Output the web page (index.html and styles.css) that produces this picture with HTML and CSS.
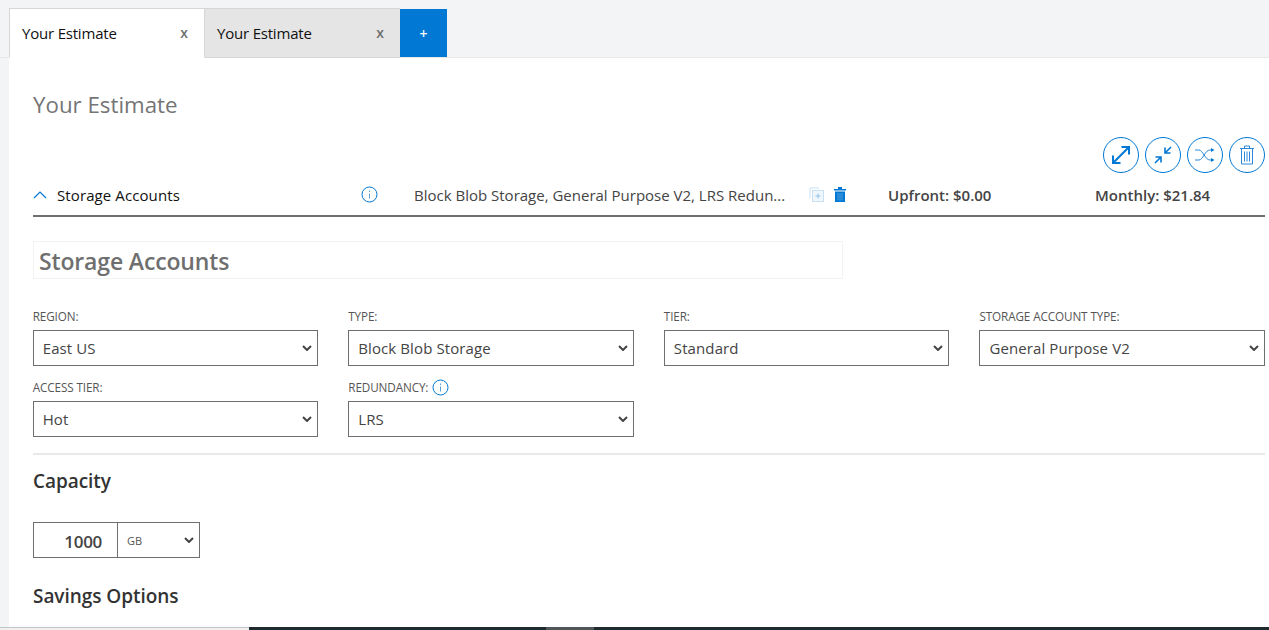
FILE: index.html
```html
<!DOCTYPE html>
<html lang="en">
<head>
<meta charset="utf-8">
<title>Your Estimate</title>
<link rel="stylesheet" href="styles.css">
</head>
<body>
<div class="tabs">
  <div class="tab tab-active"><span class="tab-name">Your Estimate</span><span class="tab-x">x</span></div>
  <div class="tab tab-idle"><span class="tab-name">Your Estimate</span><span class="tab-x">x</span></div>
  <div class="tab-add">+</div>
</div>
<main class="panel">
  <h1 class="title">Your Estimate</h1>
  <div class="tools">
    <button class="round"><svg width="22" height="22" viewBox="0 0 22 22" fill="none" stroke="#0078d4" stroke-width="2"><path d="M3 19 19 3M11.500 3H19V10.500M3 11.500V19H10.500"/></svg></button>
    <button class="round"><svg width="22" height="22" viewBox="0 0 22 22" fill="none" stroke="#0078d4" stroke-width="1.600"><path d="M13 9 19 3M13 3.500V9H18.500M3 19 9 13M3.500 13H9V18.500"/></svg></button>
    <button class="round"><svg width="20" height="16" viewBox="0 0 20 16" fill="none" stroke="#2b88d8" stroke-width="1"><path d="M0 3H4C8 3 10 13 15 13H18M0 13H4C8 13 10 3 15 3H18"/><path d="M16 1 19.500 3 16 5ZM16 11 19.500 13 16 15Z" fill="#0078d4" stroke="none"/></svg></button>
    <button class="round"><svg width="16" height="20" viewBox="0 0 16 20" fill="none" stroke="#2b88d8" stroke-width="1"><path d="M1 3.500H15M5.500 3V1H10.500V3M2.500 4V19H13.500V4M5.500 6.500V16.500M8 6.500V16.500M10.500 6.500V16.500"/></svg></button>
  </div>
  <div class="acc">
    <svg class="acc-chev" width="14" height="8" viewBox="0 0 14 8" fill="none" stroke="#0078d4" stroke-width="1.200"><path d="M1 7 7 1 13 7"/></svg>
    <span class="acc-title">Storage Accounts</span>
    <svg class="acc-info" width="17" height="17" viewBox="0 0 17 17" fill="none" stroke="#0078d4"><circle cx="8.500" cy="8.500" r="7.500"/><path d="M8.500 7.500V12.500M8.500 4.500V6" stroke="#5a9fd8"/></svg>
    <span class="acc-desc">Block Blob Storage, General Purpose V2, LRS Redun...</span>
    <svg class="acc-copy" width="15" height="15" viewBox="0 0 15 15" fill="none" stroke="#c7e0f4"><path d="M1 11V1H10"/><rect x="3.500" y="3.500" width="11" height="11" fill="#eff6fc"/><path d="M9 6.500V11.500M6.500 9H11.500" stroke="#90c2ea"/></svg>
    <svg class="acc-trash" width="12" height="15" viewBox="0 0 12 15"><path d="M0 2H4V0H8V2H12V3.500H0ZM1 4.500H11V15H1Z" fill="#0078d4"/><path d="M4 6V13.500M6 6V13.500M8 6V13.500" stroke="#71afe5" stroke-width=".7"/></svg>
    <strong class="acc-up">Upfront: $0.00</strong>
    <strong class="acc-mo">Monthly: $21.84</strong>
  </div>
  <input class="name" value="Storage Accounts">
  <div class="fields">
    <label class="field"><span class="lab">REGION:</span><select class="sel"><option>East US</option></select></label>
    <label class="field"><span class="lab">TYPE:</span><select class="sel"><option>Block Blob Storage</option></select></label>
    <label class="field"><span class="lab">TIER:</span><select class="sel"><option>Standard</option></select></label>
    <label class="field"><span class="lab">STORAGE ACCOUNT TYPE:</span><select class="sel"><option>General Purpose V2</option></select></label>
    <label class="field"><span class="lab">ACCESS TIER:</span><select class="sel"><option>Hot</option></select></label>
    <label class="field"><span class="lab">REDUNDANCY: <svg class="lab-info" width="17" height="17" viewBox="0 0 17 17" fill="none" stroke="#0078d4"><circle cx="8.500" cy="8.500" r="7.500"/><path d="M8.500 7.500V12.500M8.500 4.500V6" stroke="#5a9fd8"/></svg></span><select class="sel"><option>LRS</option></select></label>
  </div>
  <hr class="rule">
  <h2 class="sec">Capacity</h2>
  <div class="cap">
    <input class="cap-num" value="1000">
    <select class="cap-unit"><option>GB</option></select>
  </div>
  <h2 class="sec sec-save">Savings Options</h2>
</main>
<div class="strip"><div class="strip-light"></div><div class="strip-a"></div><div class="strip-b"></div><div class="strip-c"></div></div>
</body>
</html>
```
FILE: styles.css
```css
* { box-sizing: border-box; }
html, body { margin: 0; height: 630px; overflow: hidden; }
body { background: #f3f4f6; font-family: "Open Sans", "Noto Sans", sans-serif; color: #212121; position: relative; }
.tabs { display: flex; margin-top: 8px; padding-left: 9px; height: 50px; box-shadow: inset 0 -1px 0 #e8e8e8; }
.tab { width: 196px; display: flex; align-items: center; justify-content: space-between; padding: 0 16px 1px 12px; font-size: 15px; border-top: 1px solid #d6d6d6; border-bottom: 1px solid #d6d6d6; color: #111; }
.tab-active { background: #fff; border-left: 1px solid #d6d6d6; border-right: 1px solid #d6d6d6; border-bottom-color: #fff; }
.tab-idle { background: #e5e5e5; width: 195px; }
.tab-name { letter-spacing: -.2px; }
.tab-x { color: #6f6f6f; font-size: 14px; font-weight: 600; }
.tab-add { width: 47px; background: #0078d4; color: #fff; display: flex; align-items: center; justify-content: center; font-size: 14px; font-weight: 600; margin-top: 1px; margin-bottom: 1px; }
.panel { margin-left: 9px; background: #fff; height: 572px; padding: 0 4px 0 24px; }
.title { margin: 0; padding-top: 30px; height: 79px; font-size: 22.3px; line-height: 34px; font-weight: 400; color: #757575; }
.tools { display: flex; justify-content: flex-end; gap: 6px; height: 37px; }
.round { width: 36px; height: 36px; border: 1px solid #0078d4; border-radius: 50%; background: #fff; padding: 0; display: flex; align-items: center; justify-content: center; }
.acc { display: flex; align-items: center; height: 43px; border-bottom: 2px solid #6f6f6f; font-size: 15px; }
.acc-chev { margin-right: 10px; }
.acc-title { width: 304px; color: #111; letter-spacing: .1px; }
.acc-info { margin-right: 36px; }
.acc-desc { width: 375px; white-space: nowrap; color: #444; }
.acc-copy { margin-left: 20px; }
.acc-trash { margin-left: 10px; }
.acc-up { margin-left: 42px; width: 207px; font-weight: 600; color: #444; }
.acc-mo { font-weight: 600; color: #444; }
.name { display: block; width: 810px; height: 38px; margin-top: 24px; border: 1px solid #f3f3f3; padding: 1px 5px 0; font: 600 23px "Open Sans", "Noto Sans", sans-serif; color: #6f6f6f; letter-spacing: -.15px; background: #fff; }
.fields { display: grid; grid-template-columns: repeat(4, 1fr); column-gap: 30px; row-gap: 13px; margin: 29px 0 0 -.3px; }
.field { display: block; }
.lab { display: flex; align-items: center; gap: 4px; height: 22px; padding-bottom: 6px; font-size: 11.7px; color: #555; letter-spacing: -.1px; }
.lab-info { margin-top: 0; }
.sel, .cap-unit { appearance: none; background: #fff url("data:image/svg+xml,%3Csvg xmlns='http://www.w3.org/2000/svg' width='10' height='6' viewBox='0 0 10 6'%3E%3Cpath d='M1 1 5 5 9 1' fill='none' stroke='%23444' stroke-width='2'/%3E%3C/svg%3E") no-repeat right 5px center; }
.sel { display: block; width: 100%; height: 36px; border: 1px solid #6f6f6f; border-radius: 0; padding: 0 9px; font: 15px "Open Sans", "Noto Sans", sans-serif; color: #444; letter-spacing: .1px; }
.rule { margin: 16px 0 0; border: 0; border-top: 2px solid #e9e9e9; }
.sec { margin: 13px 0 0; font-size: 19px; line-height: 26px; font-weight: 600; color: #333; letter-spacing: -.05px; }
.cap { display: flex; width: 167px; height: 36px; margin-top: 28px; border: 1px solid #6f6f6f; }
.cap-num { width: 84px; border: 0; border-right: 1px solid #6f6f6f; padding: 2px 15px 0 0; text-align: right; font: 600 17px "Open Sans", "Noto Sans", sans-serif; color: #444; letter-spacing: -.3px; background: #fff; }
.cap-unit { flex: 1; min-width: 0; border: 0; border-radius: 0; padding: 0 9px; font: 11px "Open Sans", "Noto Sans", sans-serif; color: #555; }
.sec-save { margin-top: 25px; }
.strip { position: absolute; left: 0; right: 0; bottom: 0; height: 3px; display: flex; background: #1f2b2e; }
.strip-light { width: 249px; background: #f0f0f0; border-top: 1px solid #c4c4c4; }
.strip-a { width: 297px; }
.strip-b { width: 48px; background: #505658; }
.strip-c { flex: 1; }
```
